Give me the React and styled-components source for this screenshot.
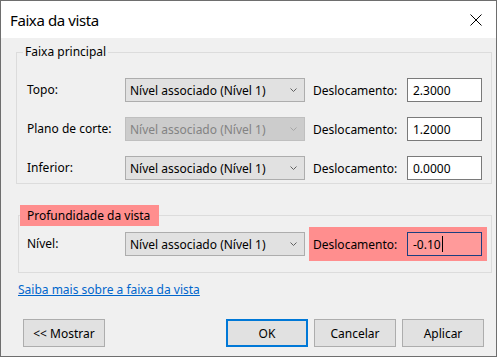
import React from 'react';
import styled, { createGlobalStyle } from 'styled-components';

const GlobalStyle = createGlobalStyle`
  html, body { margin: 0; padding: 0; background: #f0f0f0; }
  body {
    font-family: "Noto Sans", "Open Sans", sans-serif;
    font-size: 12px;
    color: #000;
  }
  * { box-sizing: border-box; }
`;

const Window = styled.div`
  width: 497px;
  height: 357px;
  border: 1px solid #6e6e6e;
  background: #f0f0f0;
  display: flex;
  flex-direction: column;
  overflow: hidden;
`;

const TitleBar = styled.div`
  flex: none;
  height: 37px;
  background: #ffffff;
  display: flex;
  align-items: center;
  justify-content: space-between;
  padding: 0 14px 0 9px;
`;

const Title = styled.div`
  font-size: 15px;
  letter-spacing: -0.4px;
  line-height: 20px;
`;

const CloseIcon = styled.svg`
  width: 12px;
  height: 12px;
  display: block;
`;

const Content = styled.div`
  flex: 1;
  display: flex;
  flex-direction: column;
  padding-top: 6px;
`;

const Group = styled.fieldset`
  margin: ${p => p.$top}px 4px 0 ${p => p.$left}px;
  padding: 0;
  border: 1px solid #dcdcdc;
  min-width: 0;
`;

const Legend = styled.legend`
  margin-left: ${p => (p.$highlight ? 1 : 6)}px;
  padding: ${p => (p.$highlight ? '0 9px 0 7px' : '0 2px')};
  line-height: ${p => (p.$highlight ? 21 : 16)}px;
  background: ${p => (p.$highlight ? '#ff8e8e' : 'transparent')};
`;

const GroupBody = styled.div`
  display: flex;
  flex-direction: column;
  gap: 15px;
  padding: ${p => p.$pad};
`;

const Row = styled.div`
  display: flex;
  align-items: center;
`;

const Label = styled.div`
  width: 98px;
  flex: none;
  line-height: 16px;
`;

const Select = styled.div`
  width: 180px;
  height: 24px;
  flex: none;
  display: flex;
  align-items: center;
  justify-content: space-between;
  padding: 0 7px 0 4px;
  border: 1px solid ${p => (p.$disabled ? '#bfbfbf' : '#adadad')};
  background: ${p => (p.$disabled ? '#cccccc' : '#e1e1e1')};
  color: ${p => (p.$disabled ? '#838383' : '#000')};
  white-space: nowrap;
`;

const Chevron = styled.svg`
  width: 7px;
  height: 4px;
  display: block;
`;

const OffsetCell = styled.div`
  display: flex;
  align-items: center;
  margin-left: 4px;
  padding: ${p => (p.$highlight ? '5px 5px 5px 4px' : '0 5px 0 4px')};
  background: ${p => (p.$highlight ? '#ff8e8e' : 'transparent')};
`;

const OffsetLabel = styled.div`
  width: 94px;
  flex: none;
`;

const TextBox = styled.div`
  width: 75px;
  height: 24px;
  flex: none;
  display: flex;
  align-items: center;
  padding-left: 5px;
  border: 1px solid ${p => (p.$focused ? '#1c3f80' : '#7a7a7a')};
  background: ${p => (p.$focused ? '#ff9a9a' : '#ffffff')};
`;

const Caret = styled.span`
  display: inline-block;
  width: 1px;
  height: 16px;
  background: #000;
  margin-left: 1px;
`;

const HelpLink = styled.a`
  margin: 9px 0 0 17px;
  line-height: 16px;
  color: #0066cc;
  text-decoration: underline;
  align-self: flex-start;
  cursor: pointer;
`;

const Footer = styled.div`
  display: flex;
  align-items: center;
  gap: 6px;
  margin-top: 21px;
  padding: 0 12px 0 22px;
`;

const Spacer = styled.div`
  flex: 1;
`;

const Button = styled.button`
  width: 82px;
  height: 28px;
  flex: none;
  font-family: inherit;
  font-size: 12px;
  color: #000;
  background: #e1e1e1;
  border: ${p => (p.$default ? '2px solid #0078d7' : '1px solid #adadad')};
  padding: 0;
`;

const ChevronDown = ({ color }) => (
  <Chevron viewBox="0 0 7 4">
    <polyline points="0.5,0.5 3.5,3.5 6.5,0.5" fill="none" stroke={color} strokeWidth="1" />
  </Chevron>
);

const LevelSelect = ({ disabled }) => (
  <Select $disabled={disabled}>
    <span>Nível associado (Nível 1)</span>
    <ChevronDown color={disabled ? '#a6a6a6' : '#606060'} />
  </Select>
);

const rows = [
  { label: 'Topo:', value: '2.3000' },
  { label: 'Plano de corte:', value: '1.2000', disabled: true },
  { label: 'Inferior:', value: '0.0000' },
];

export default function App() {
  return (
    <>
      <GlobalStyle />
      <Window>
        <TitleBar>
          <Title>Faixa da vista</Title>
          <CloseIcon viewBox="0 0 12 12">
            <line x1="0.5" y1="0.5" x2="11.5" y2="11.5" stroke="#000" strokeWidth="1" />
            <line x1="11.5" y1="0.5" x2="0.5" y2="11.5" stroke="#000" strokeWidth="1" />
          </CloseIcon>
        </TitleBar>
        <Content>
          <Group $top={0} $left={15}>
            <Legend>Faixa principal</Legend>
            <GroupBody $pad="18px 10px 3px 10px">
              {rows.map(r => (
                <Row key={r.label}>
                  <Label>{r.label}</Label>
                  <LevelSelect disabled={r.disabled} />
                  <OffsetCell>
                    <OffsetLabel>Deslocamento:</OffsetLabel>
                    <TextBox>{r.value}</TextBox>
                  </OffsetCell>
                </Row>
              ))}
            </GroupBody>
          </Group>
          <Group $top={21} $left={17}>
            <Legend $highlight>Profundidade da vista</Legend>
            <GroupBody $pad="1px 8px 11px 8px">
              <Row>
                <Label>Nível:</Label>
                <LevelSelect />
                <OffsetCell $highlight>
                  <OffsetLabel>Deslocamento:</OffsetLabel>
                  <TextBox $focused>
                    -0.10
                    <Caret />
                  </TextBox>
                </OffsetCell>
              </Row>
            </GroupBody>
          </Group>
          <HelpLink>Saiba mais sobre a faixa da vista</HelpLink>
          <Footer>
            <Button>&lt;&lt; Mostrar</Button>
            <Spacer />
            <Button $default>OK</Button>
            <Button>Cancelar</Button>
            <Button>Aplicar</Button>
          </Footer>
        </Content>
      </Window>
    </>
  );
}
